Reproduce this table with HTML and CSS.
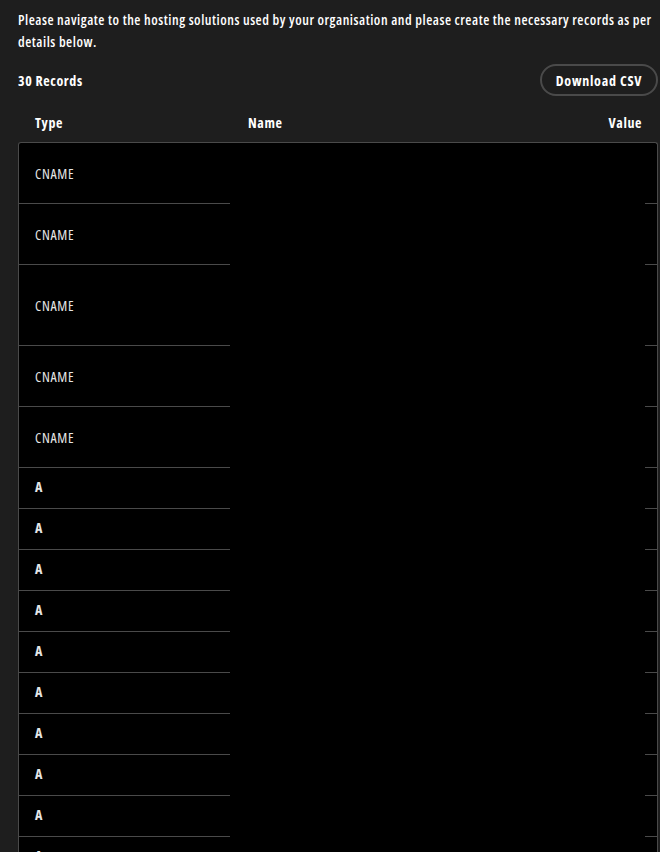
FILE: index.html
```html
<!DOCTYPE html>
<html lang="en">
<head>
    <meta charset="UTF-8">
    <meta name="viewport" content="width=device-width, initial-scale=1.0">
    <title>DNS records</title>
    <link rel="stylesheet" href="styles.css">
</head>
<body>
    <div class="page">
        <p class="intro">Please navigate to the hosting solutions used by your organisation and please create the necessary records as per details below.</p>

        <div class="toolbar">
            <span class="count">30 Records</span>
            <button class="btn-csv" type="button">Download CSV</button>
        </div>

        <div class="records">
            <div class="records-head">
                <span class="col-type">Type</span>
                <span class="col-name">Name</span>
                <span class="col-value">Value</span>
            </div>
            <div class="records-body" id="records-body"></div>
        </div>
    </div>

    <script>
    document.addEventListener('DOMContentLoaded', () => {
        const body = document.getElementById('records-body');

        // 5 CNAME + 25 A
        const records = [
            { type: 'CNAME' },
            { type: 'CNAME' },
            { type: 'CNAME', tall: true },
            { type: 'CNAME' },
            { type: 'CNAME' }
        ];
        for (let i = 0; i < 25; i++) {
            records.push({ type: 'A' });
        }

        records.forEach(rec => {
            const row = document.createElement('div');
            row.className = 'record';
            if (rec.type === 'CNAME') row.classList.add('record--cname');
            if (rec.tall) row.classList.add('record--tall');

            row.innerHTML =
                '<div class="cell cell-type">' + rec.type + '</div>' +
                '<div class="cell cell-name"></div>' +
                '<div class="cell cell-edge"></div>';
            body.appendChild(row);
        });
    });
    </script>
</body>
</html>
```

FILE: styles.css
```css
body {
    margin: 0;
    background-color: #1e1e1e;
    color: #fff;
    font-family: "Open Sans", "Liberation Sans", Arial, sans-serif;
    font-stretch: condensed;
    font-size: 14px;
    letter-spacing: 0.6px;
}

.page {
    padding: 9px 2px 0 18px;
}

.intro {
    margin: 0;
    line-height: 22px;
    font-weight: 600;
    letter-spacing: 0.52px;
}

.toolbar {
    display: flex;
    justify-content: space-between;
    align-items: center;
    margin-top: 11px;
}

.count {
    font-weight: 700;
}

.btn-csv {
    height: 32px;
    width: 118px;
    padding: 0;
    background: transparent;
    color: #fff;
    border: 2px solid #4a4a4a;
    border-radius: 16px;
    font-family: inherit;
    font-stretch: inherit;
    font-size: 14px;
    font-weight: 700;
    letter-spacing: 0.75px;
    cursor: pointer;
}

.records-head {
    display: grid;
    grid-template-columns: 213px 1fr auto;
    padding: 18px 16px 10px 17px;
    line-height: 18px;
    font-weight: 700;
}

.col-value {
    text-align: right;
}

.records-body {
    background-color: #000;
    border: 1px solid #4a4a4a;
    border-bottom: none;
    border-radius: 3px 3px 0 0;
}

.record {
    display: grid;
    grid-template-columns: 211px 1fr 12px;
    height: 41px;
}

.record--cname {
    height: 61px;
}

.record--tall {
    height: 81px;
}

.cell {
    display: flex;
    align-items: center;
}

.cell-type {
    padding-left: 16px;
    color: #e6e6e6;
    border-bottom: 1px solid #4a4a4a;
}

.record--cname .cell-type {
    letter-spacing: 0.7px;
}

.record:not(.record--cname) .cell-type {
    font-weight: 700;
    padding-bottom: 3px;
}

.cell-edge {
    border-bottom: 1px solid #4a4a4a;
}
```
